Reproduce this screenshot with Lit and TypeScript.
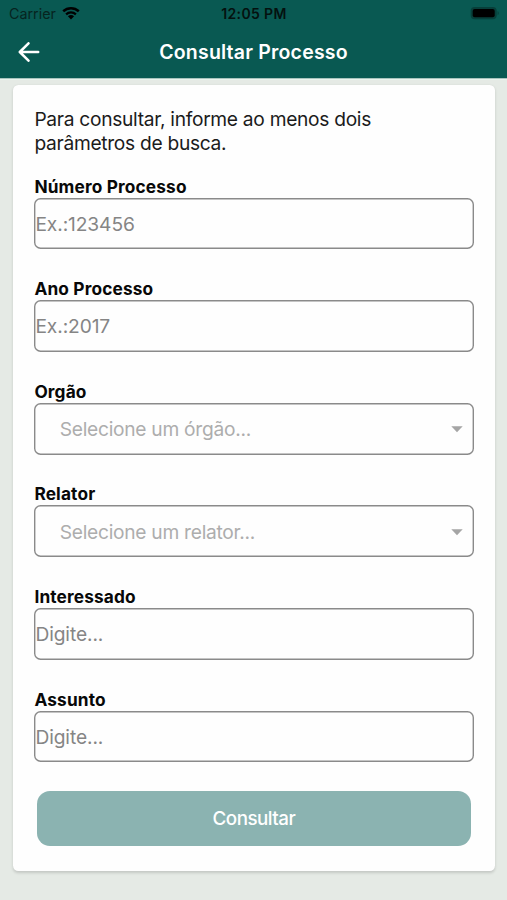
import { LitElement, html, css, svg } from "lit";
import { customElement, property } from "lit/decorators.js";

@customElement("form-field")
class FormField extends LitElement {
  @property() label = "";
  @property() hint = "";
  @property({ type: Boolean }) select = false;

  static styles = css`
    :host { display: block; height: 102.64px; }
    .label { display: block; height: 22px; line-height: 22.4px; font-size: 17.3px; font-weight: 700; color: #080808; letter-spacing: 0.14px; margin-left: -0.5px; white-space: nowrap; }
    .box { display: flex; align-items: center; justify-content: space-between; box-sizing: border-box; width: 439.5px; height: 51.8px; margin-left: -0.7px; padding: 0.6px 10.5px 0 1.2px; border-radius: 6.5px; box-shadow: inset 0 0 0 1.4px #8a8a8a; font-size: 19.2px; color: #858585; letter-spacing: -0.1px; }
    .box.select { padding-left: 25.5px; color: #adadad; letter-spacing: -0.27px; }
    .arrow { width: 12px; height: 7px; margin-top: 1px; flex: none; }
  `;

  render() {
    return html`<span class="label">${this.label}</span>
      <div class="box ${this.select ? "select" : ""}">
        <span>${this.hint}</span>
        ${this.select ? html`<svg class="arrow" viewBox="0 0 12 7"><path d="M.3.3h11.4L6 6.2z" fill="#a5a5a5"/></svg>` : ""}
      </div>`;
  }
}

const wifi = svg`<path d="M1.2 5.2a11.6 11.6 0 0 1 15.6 0" fill="none" stroke="#000" stroke-width="2.5"/><path d="M4.1 8.3a7.4 7.4 0 0 1 9.8 0" fill="none" stroke="#000" stroke-width="2.3"/><path d="M5.9 10.3a4.8 4.8 0 0 1 6.2 0L9 13.6z"/>`;

@customElement("app-root")
class AppRoot extends LitElement {
  static styles = css`
    :host { display: block; height: 900px; overflow: hidden; background: #e5eae5; font-family: Inter, "Liberation Sans", sans-serif; }
    .header { height: 78px; background: #095952; border-bottom: 1px solid #a9c5bf; box-shadow: 0 1px 0 #eaf3ed; }
    .status { display: grid; grid-template-columns: 1fr auto 1fr; align-items: center; height: 27px; padding: 0 8px 0 9px; color: #04110f; }
    .carrier { display: flex; align-items: center; gap: 6px; font-size: 14.3px; color: #06241f; }
    .wifi { width: 18px; height: 14px; margin-top: -2px; }
    .time { font-size: 14px; font-weight: 600; letter-spacing: 0.35px; }
    .battery { justify-self: end; width: 29px; height: 14px; margin-top: -1px; }
    .nav { display: grid; grid-template-columns: 60px 1fr 60px; align-items: center; height: 50px; color: #fff; }
    .back { width: 22px; height: 20px; margin-left: 18px; }
    .title { text-align: center; font-size: 19.5px; font-weight: 600; letter-spacing: 0.2px; white-space: nowrap; }
    .card { box-sizing: border-box; width: 481.3px; height: 786px; margin: 6px 0 0 13.3px; padding: 21.5px 21.6px 0; border-radius: 5.4px; background: #fefefe; box-shadow: 0 1.5px 3px rgba(0, 0, 0, .15); }
    .intro { height: 69px; margin: 0 0 0 -0.5px; font-size: 19.2px; line-height: 24.5px; letter-spacing: -0.3px; color: #1b1b1b; white-space: nowrap; }
    .submit { display: flex; align-items: center; justify-content: center; width: 434px; height: 54.5px; margin: -0.2px 0 0 2px; padding: 1px 0 0; border: 0; border-radius: 13px; background: #8bb3b1; color: #fff; font: 500 18.8px Inter, sans-serif; letter-spacing: -0.5px; }
  `;

  render() {
    return html`
      <header class="header">
        <div class="status">
          <div class="carrier"><span class="carriername">Carrier</span><svg class="wifi" viewBox="0 0 18 14">${wifi}</svg></div>
          <span class="time">12:05 PM</span>
          <svg class="battery" viewBox="0 0 29 14"><rect x=".7" y=".9" width="26" height="12.4" rx="4" fill="#073f3a"/><rect x="2.7" y="2.9" width="22" height="8.4" rx="2"/><path d="M27.6 5c1.5.8 1.5 3.4 0 4.2z" fill="#073f3a"/></svg>
        </div>
        <div class="nav">
          <svg class="back" viewBox="0 0 22 20" fill="none" stroke="#fff" stroke-width="2.5" stroke-linecap="round" stroke-linejoin="round"><path d="M10.5 1.3 1.8 10l8.7 8.7M2 10h18.2"/></svg>
          <span class="title">Consultar Processo</span>
        </div>
      </header>
      <main class="card">
        <p class="intro">Para consultar, informe ao menos dois<br>parâmetros de busca.</p>
        <form-field label="Número Processo" hint="Ex.:123456"></form-field>
        <form-field label="Ano Processo" hint="Ex.:2017"></form-field>
        <form-field label="Orgão" hint="Selecione um órgão..." select></form-field>
        <form-field label="Relator" hint="Selecione um relator..." select></form-field>
        <form-field label="Interessado" hint="Digite..."></form-field>
        <form-field label="Assunto" hint="Digite..."></form-field>
        <button class="submit">Consultar</button>
      </main>`;
  }
}
